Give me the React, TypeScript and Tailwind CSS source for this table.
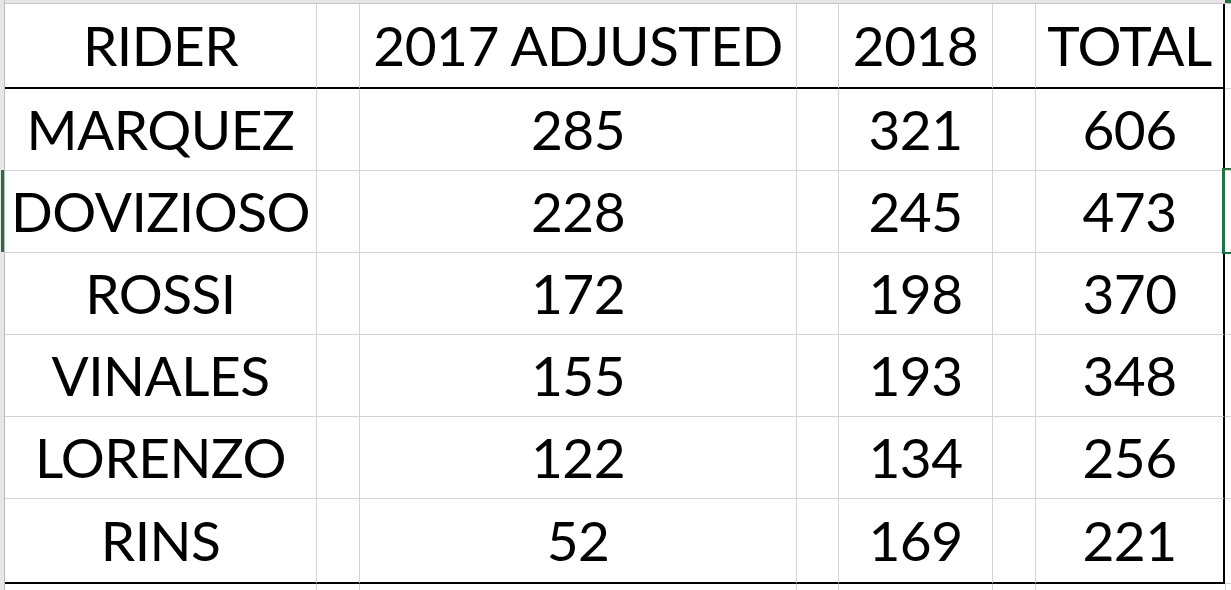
import React from 'react';

const rows = [
  ['MARQUEZ', '285', '321', '606'],
  ['DOVIZIOSO', '228', '245', '473'],
  ['ROSSI', '172', '198', '370'],
  ['VINALES', '155', '193', '348'],
  ['LORENZO', '122', '134', '256'],
  ['RINS', '52', '169', '221'],
];

function Row({ cells, h, bottom }: { cells: string[]; h: string; bottom: string }) {
  const [a, c, e, g] = cells;
  const cell = `flex items-center justify-center border-r border-[#d4d4d4] ${bottom}`;
  return (
    <div className={`flex ${h}`}>
      <div className="w-[5px] shrink-0 bg-[#e6e6e6] border-r border-[#bcbcbc]" />
      <div className={`w-[312px] shrink-0 ${cell}`}>{a}</div>
      <div className={`w-[43px] shrink-0 ${cell}`} />
      <div className={`w-[437px] shrink-0 ${cell}`}>{c}</div>
      <div className={`w-[42px] shrink-0 ${cell}`} />
      <div className={`w-[154px] shrink-0 ${cell}`}>{e}</div>
      <div className={`w-[43px] shrink-0 ${cell}`} />
      <div className={`w-[189px] shrink-0 flex items-center justify-center border-r-2 border-r-black ${bottom}`}>{g}</div>
      <div className="flex-1 border-b border-[#d4d4d4]" />
    </div>
  );
}

export default function App() {
  return (
    <div className="relative w-[1231px] h-[590px] overflow-hidden bg-white text-black font-['Lato',sans-serif] text-[55px] tracking-[-0.01em] leading-none">
      {/* column header edge */}
      <div className="flex h-[4px]">
        <div className="w-[5px] bg-[#e6e6e6] border-r border-[#bcbcbc]" />
        <div className="flex-1 bg-[#e6e6e6] border-b border-[#c6c6c6]" />
      </div>
      <Row cells={['RIDER', '2017 ADJUSTED', '2018', 'TOTAL']} h="h-[85px]" bottom="border-b-2 border-b-black" />
      {rows.map((r, i) => (
        <Row
          key={r[0]}
          cells={r}
          h={i === rows.length - 1 ? 'h-[85px]' : 'h-[82px]'}
          bottom={i === rows.length - 1 ? 'border-b-2 border-b-black' : 'border-b border-b-[#d4d4d4]'}
        />
      ))}
      <div className="flex h-[10px]">
        <div className="w-[5px] shrink-0 bg-[#e6e6e6] border-r border-[#bcbcbc]" />
        <div className="w-[312px] shrink-0 border-r border-[#d4d4d4]" />
        <div className="w-[43px] shrink-0 border-r border-[#d4d4d4]" />
        <div className="w-[437px] shrink-0 border-r border-[#d4d4d4]" />
        <div className="w-[42px] shrink-0 border-r border-[#d4d4d4]" />
        <div className="w-[154px] shrink-0 border-r border-[#d4d4d4]" />
        <div className="w-[43px] shrink-0 border-r border-[#d4d4d4]" />
        <div className="w-[190px] shrink-0 border-r border-[#d4d4d4]" />
      </div>

      {/* selection fragments */}
      <div className="absolute left-[1px] top-[170px] h-[82px] w-[3px] bg-[#217346]" />
      <div className="absolute left-[1222px] top-[168px] h-[86px] w-[3px] bg-[#217346]" />
      <div className="absolute left-[1222px] top-[168px] h-[2px] w-[9px] bg-[#217346]" />
      <div className="absolute left-[1222px] top-[252px] h-[2px] w-[9px] bg-[#217346]" />
      <div className="absolute left-[1225px] top-0 h-[3px] w-[6px] bg-[#217346]" />
    </div>
  );
}
